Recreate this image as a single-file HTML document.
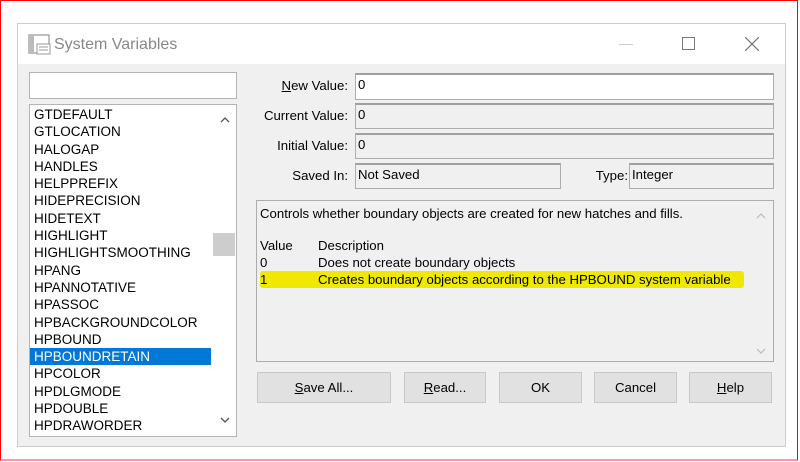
<!DOCTYPE html>
<html><head><style>
*{margin:0;padding:0;box-sizing:border-box}
body{width:800px;height:462px;background:#fff;position:relative;overflow:hidden;font-family:"Liberation Sans",Arial,sans-serif;font-size:13.2px;color:#000}
.abs{position:absolute}
.red{position:absolute;left:0;top:0;width:798px;height:461px;border:1px solid #f00;border-bottom:2px solid #f99}
.dlg{left:17px;top:23px;width:769px;height:424px;border:1px solid #ccc;background:#f0f0f0}
.title{left:0;top:0;width:767px;height:40px;background:#fff}
.field{position:absolute;border:1px solid #adadad;border-top:2px solid #a0a0a0;padding:1px 2px;line-height:17px}
.lbl{position:absolute;text-align:right;width:120px;line-height:16px}
.btn{position:absolute;top:348px;height:31px;border:1px solid #c8c8c8;background:#e1e1e1;text-align:center;line-height:29px}
.list div{height:17.3px;line-height:17.3px;padding-left:4px;font-size:13.5px}
u{text-decoration:underline}
</style></head><body>
<div class="red"></div>
<div class="abs dlg">
 <div class="abs title">
  <svg class="abs" style="left:10px;top:10px" width="24" height="22" viewBox="0 0 24 22"><rect x="1" y="1" width="20" height="18" fill="none" stroke="#aaa" stroke-width="1.5"/><rect x="1" y="1" width="5" height="18" fill="#bbb"/><rect x="9" y="10" width="13" height="10" fill="#fff" stroke="#999"/><line x1="11" y1="13" x2="20" y2="13" stroke="#999"/><line x1="11" y1="16" x2="20" y2="16" stroke="#999"/></svg>
  <div class="abs" style="left:36px;top:12px;font-size:16px;color:#888">System Variables</div>
  <div class="abs" style="left:601px;top:20px;width:14px;height:1px;background:#ccc"></div>
  <div class="abs" style="left:664px;top:13px;width:13px;height:13px;border:1px solid #777"></div>
  <svg class="abs" style="left:727px;top:13px" width="14" height="14"><path d="M0 0L14 14M14 0L0 14" stroke="#777" stroke-width="1.2"/></svg>
 </div>
 <div class="abs" style="left:11px;top:48px;width:208px;height:27px;background:#fff;border:1px solid #b4b4b4"></div>
 <div class="abs list" style="left:11px;top:80px;width:208px;height:333px;background:#fff;border:1px solid #b4b4b4;padding-top:1px">
  <div>GTDEFAULT</div><div>GTLOCATION</div><div>HALOGAP</div><div>HANDLES</div><div>HELPPREFIX</div><div>HIDEPRECISION</div><div>HIDETEXT</div><div>HIGHLIGHT</div><div>HIGHLIGHTSMOOTHING</div><div>HPANG</div><div>HPANNOTATIVE</div><div>HPASSOC</div><div>HPBACKGROUNDCOLOR</div><div>HPBOUND</div><div style="background:#0078d7;color:#fff;width:181px">HPBOUNDRETAIN</div><div>HPCOLOR</div><div>HPDLGMODE</div><div>HPDOUBLE</div><div>HPDRAWORDER</div>
  <div class="abs" style="left:183px;top:0;width:23px;height:331px;background:#fff"></div>
  <svg class="abs" style="left:190px;top:12px" width="10" height="6"><path d="M1 5L5 1L9 5" fill="none" stroke="#555" stroke-width="1.3"/></svg>
  <svg class="abs" style="left:190px;top:312px" width="10" height="6"><path d="M1 1L5 5L9 1" fill="none" stroke="#555" stroke-width="1.3"/></svg>
  <div class="abs" style="left:183px;top:128px;width:22px;height:23px;background:#cdcdcd"></div>
 </div>
 <div class="lbl" style="left:210px;top:54px"><u>N</u>ew Value:</div>
 <div class="lbl" style="left:210px;top:84px">Current Value:</div>
 <div class="lbl" style="left:210px;top:114px">Initial Value:</div>
 <div class="lbl" style="left:210px;top:144px">Saved In:</div>
 <div class="lbl" style="left:490px;top:144px">Type:</div>
 <div class="field" style="left:337px;top:49px;width:419px;height:27px;background:#fff">0</div>
 <div class="field" style="left:337px;top:79px;width:419px;height:26px">0</div>
 <div class="field" style="left:337px;top:109px;width:419px;height:26px">0</div>
 <div class="field" style="left:337px;top:139px;width:206px;height:26px">Not Saved</div>
 <div class="field" style="left:611px;top:139px;width:145px;height:26px">Integer</div>
 <div class="abs" style="left:238px;top:176px;width:518px;height:162px;border:1px solid #adadad;padding:4px 3px;line-height:17px">
  Controls whether boundary objects are created for new hatches and fills.<br><br>
  <div style="margin-top:-2px">
  <div style="display:flex"><span style="width:58px">Value</span><span>Description</span></div>
  <div style="display:flex"><span style="width:58px">0</span><span>Does not create boundary objects</span></div>
  <div style="display:flex;background:#f0e800;width:484px;border-radius:3px"><span style="width:58px">1</span><span>Creates boundary objects according to the HPBOUND system variable</span></div>
  </div>
  <svg class="abs" style="right:7px;top:12px" width="10" height="6"><path d="M1 5L5 1L9 5" fill="none" stroke="#bbb" stroke-width="1.2"/></svg>
  <svg class="abs" style="right:7px;top:147px" width="10" height="6"><path d="M1 1L5 5L9 1" fill="none" stroke="#bbb" stroke-width="1.2"/></svg>
 </div>
 <div class="btn" style="left:239px;width:134px"><u>S</u>ave All...</div>
 <div class="btn" style="left:386px;width:82px"><u>R</u>ead...</div>
 <div class="btn" style="left:481px;width:83px">OK</div>
 <div class="btn" style="left:576px;width:83px">Cancel</div>
 <div class="btn" style="left:671px;width:83px"><u>H</u>elp</div>
</div>
</body></html>
